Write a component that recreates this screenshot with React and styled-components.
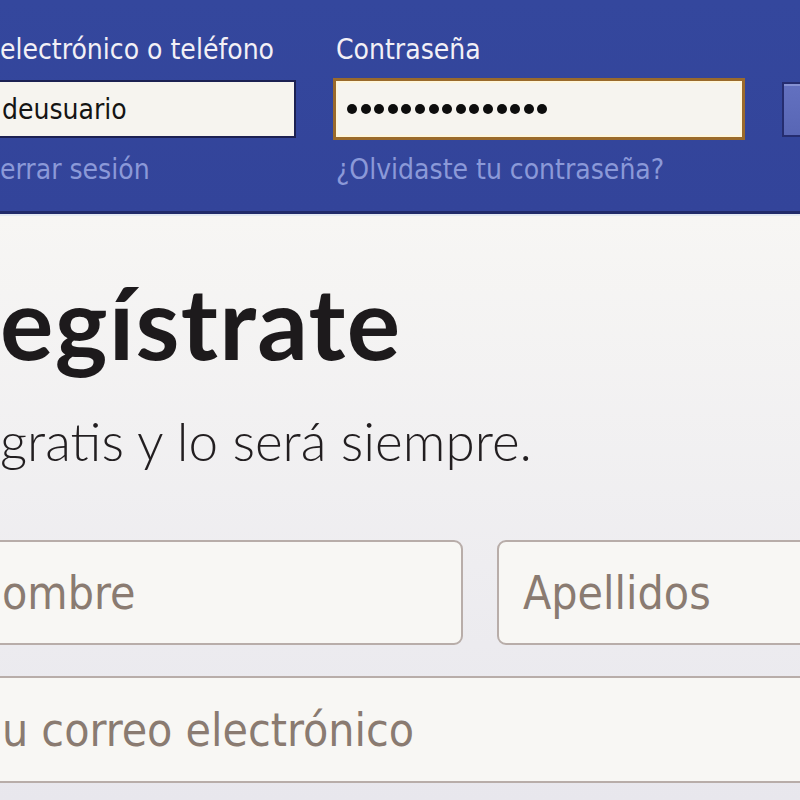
import React from "react";
import styled, { createGlobalStyle } from "styled-components";

const Global = createGlobalStyle`
  html, body { margin: 0; padding: 0; background: #eeedf0; }
  * { box-sizing: border-box; }
`;

const formFont = `"DejaVu Sans", "Liberation Sans", sans-serif`;
const titleFont = `Lato, "Open Sans", sans-serif`;

const Page = styled.div`
  width: 800px;
  height: 800px;
  overflow: hidden;
  display: flex;
  flex-direction: column;
`;

const Header = styled.header`
  flex: none;
  height: 214px;
  background: linear-gradient(#34479d, #33449a);
  border-bottom: 3px solid #212a6a;
  padding-top: 34px;
`;

const HeaderRow = styled.div`
  display: flex;
  align-items: flex-start;
  gap: 37px;
  margin-left: -4px;
`;

const Field = styled.div`
  flex: none;
  width: ${(p) => p.$w}px;
  display: flex;
  flex-direction: column;
`;

const Label = styled.label`
  font-family: ${formFont};
  font-stretch: condensed;
  font-size: 28px;
  line-height: 32px;
  color: #f3f0f6;
  padding-left: ${(p) => p.$indent || 0}px;
  margin-bottom: 14px;
  white-space: nowrap;
`;

const TextBox = styled.div`
  height: ${(p) => (p.$focused ? 62 : 58)}px;
  margin: ${(p) => (p.$focused ? "-2px 0" : "0")};
  background: #f6f4ef;
  border: ${(p) => (p.$focused ? "3px solid #9a6a2c" : "2px solid #1c2152")};
  box-shadow: ${(p) => (p.$focused ? "inset 0 0 0 2px #fff6dc" : "none")};
  display: flex;
  align-items: center;
  padding-left: ${(p) => (p.$focused ? 11 : 4)}px;
  font-family: ${formFont};
  font-stretch: condensed;
  font-size: 28px;
  color: #141414;
  white-space: nowrap;
  overflow: hidden;
`;

const Dots = styled.span`
  display: flex;
  gap: 3.6px;
`;

const Dot = styled.i`
  display: block;
  width: 10px;
  height: 10px;
  border-radius: 50%;
  background: #0d0d0d;
`;

const HelpLink = styled.a`
  margin-top: 16px;
  font-family: ${formFont};
  font-stretch: condensed;
  font-size: 28px;
  line-height: 32px;
  color: #8b99d8;
  text-decoration: none;
  white-space: nowrap;
  padding-left: ${(p) => p.$indent || 0}px;
`;

const LoginButton = styled.button`
  flex: none;
  margin-top: 48px;
  width: 120px;
  height: 55px;
  background: linear-gradient(#6371c0, #5866b5);
  border: 2px solid #252d70;
  box-shadow: inset 0 2px 0 #8591d2;
`;

const Main = styled.main`
  flex: 1;
  border-top: 2px solid #e3e9f2;
  background: linear-gradient(#f7f6f4, #eeedf0 60%, #e8e7ed);
  padding-top: 55px;
`;

const Title = styled.h1`
  margin: 0;
  font-family: ${titleFont};
  font-weight: 700;
  font-size: 100px;
  line-height: 100px;
  color: #1d1a1c;
  letter-spacing: 1.3px;
  white-space: nowrap;
`;

const Subtitle = styled.p`
  margin: 42px 0 0;
  font-family: ${titleFont};
  font-weight: 300;
  font-size: 53px;
  line-height: 55px;
  color: #221e20;
  white-space: nowrap;
`;

const InputRow = styled.div`
  display: flex;
  gap: 34px;
  margin-top: 72px;
  margin-left: -24px;
`;

const BigInput = styled.div`
  flex: none;
  width: ${(p) => p.$w}px;
  height: ${(p) => p.$h || 105}px;
  margin-top: ${(p) => p.$mt || 0}px;
  margin-left: ${(p) => p.$ml || 0}px;
  background: #f8f7f4;
  border: 2px solid #b8ada9;
  border-radius: 9px;
  display: flex;
  align-items: center;
  padding-left: 24px;
  font-family: ${formFont};
  font-stretch: condensed;
  font-size: 46px;
  color: #8a7b71;
  white-space: nowrap;
`;

export default function App() {
  return (
    <Page>
      <Global />
      <Header>
        <HeaderRow>
          <Field $w={300}>
            <Label $indent={4}>electrónico o teléfono</Label>
            <TextBox>deusuario</TextBox>
            <HelpLink $indent={4}>errar sesión</HelpLink>
          </Field>
          <Field $w={412}>
            <Label $indent={3}>Contraseña</Label>
            <TextBox $focused aria-label="contraseña">
              <Dots>
                {Array.from({ length: 15 }, (_, i) => (
                  <Dot key={i} />
                ))}
              </Dots>
            </TextBox>
            <HelpLink $indent={3} href="#">¿Olvidaste tu contraseña?</HelpLink>
          </Field>
          <LoginButton aria-label="Entrar" />
        </HeaderRow>
      </Header>
      <Main>
        <Title>egístrate</Title>
        <Subtitle>gratis y lo será siempre.</Subtitle>
        <InputRow>
          <BigInput $w={487}>ombre</BigInput>
          <BigInput $w={420}>Apellidos</BigInput>
        </InputRow>
        <BigInput $w={900} $h={107} $mt={31} $ml={-24}>
          u correo electrónico
        </BigInput>
      </Main>
    </Page>
  );
}
